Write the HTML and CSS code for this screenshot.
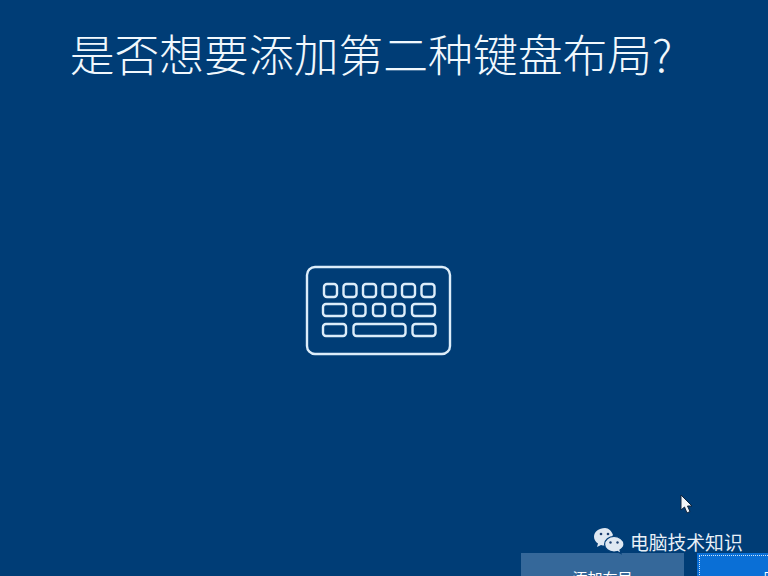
FILE: index.html
```html
<!DOCTYPE html>
<html lang="zh-CN">
<head>
<meta charset="UTF-8">
<meta name="viewport" content="width=device-width, initial-scale=1.0">
<title>是否想要添加第二种键盘布局?</title>
<link rel="stylesheet" href="styles.css">
</head>
<body>

<div id="oobe">
    <h1 class="title">是否想要添加第二种键盘布局?</h1>

    <div class="hero">
        <svg class="keyboard" width="150" height="94" viewBox="0 0 150 94" fill="none" stroke="#dcedfa" stroke-width="2.400">
            <rect x="3" y="3" width="143" height="87" rx="8"/>
            <rect x="20" y="20" width="13" height="13" rx="3"/>
            <rect x="39.500" y="20" width="13" height="13" rx="3"/>
            <rect x="59" y="20" width="13" height="13" rx="3"/>
            <rect x="78.500" y="20" width="13" height="13" rx="3"/>
            <rect x="98" y="20" width="13" height="13" rx="3"/>
            <rect x="117.500" y="20" width="13" height="13" rx="3"/>
            <rect x="19" y="40" width="23" height="12" rx="3"/>
            <rect x="49.500" y="40" width="12" height="12" rx="3"/>
            <rect x="69" y="40" width="12" height="12" rx="3"/>
            <rect x="88.500" y="40" width="12" height="12" rx="3"/>
            <rect x="108" y="40" width="23" height="12" rx="3"/>
            <rect x="19" y="60" width="23" height="12" rx="3"/>
            <rect x="49.500" y="60" width="52" height="12" rx="3"/>
            <rect x="108.500" y="60" width="23" height="12" rx="3"/>
        </svg>
    </div>

    <div class="actions">
        <button class="btn btn-secondary">添加布局</button>
        <button class="btn btn-primary">跳过</button>
    </div>
</div>

<!-- screen recording overlays -->
<svg class="cursor" width="14" height="20" viewBox="0 0 14 20">
    <path d="M1 1 L1 16 L4.500 13 L7 19 L10 17.500 L7.500 12 L12 12 Z" fill="#f2f5f8" stroke="#10243c" stroke-width="1"/>
</svg>

<div class="watermark">
    <svg class="wechat" width="32" height="28" viewBox="0 0 32 28">
        <path d="M12 1 C5.900 1 1 4.900 1 9.800 C1 12.600 2.600 15 5 16.600 L4 20 L8 18 C9.200 18.400 10.500 18.600 12 18.600 L20 8 C18.600 3.900 15.700 1 12 1 Z" fill="#dfe8f2"/>
        <path d="M21 9.500 C15.800 9.500 11.600 13 11.600 17.300 C11.600 21.600 15.800 25 21 25 C22.200 25 23.300 24.800 24.300 24.500 L28 26.500 L27 23 C29.500 21.500 31 19.500 31 17.300 C31 13 26.200 9.500 21 9.500 Z" fill="#dfe8f2" stroke="#003d76" stroke-width="1.200"/>
        <circle cx="8" cy="7" r="1.300" fill="#1d3f70"/>
        <circle cx="15" cy="7" r="1.300" fill="#1d3f70"/>
        <circle cx="17.500" cy="15.500" r="1.200" fill="#1d3f70"/>
        <circle cx="24.500" cy="15.500" r="1.200" fill="#1d3f70"/>
    </svg>
    <span class="watermark-text">电脑技术知识</span>
</div>

</body>
</html>
```

FILE: styles.css
```css
html, body {
    margin: 0;
    padding: 0;
    height: 100%;
}
body {
    position: relative;
    width: 768px;
    height: 576px;
    overflow: hidden;
    background-color: #003d76;
    color: #f1f8fd;
    font-family: "Noto Sans CJK SC", "Noto Sans", sans-serif;
}
#oobe {
    display: flex;
    flex-direction: column;
    height: 576px;
}
.title {
    margin: 0;
    padding-top: 21px;
    padding-right: 26px;
    height: 65px;
    line-height: 64px;
    font-size: 44.800px;
    font-weight: 300;
    text-align: center;
    white-space: nowrap;
}
.hero {
    display: flex;
    justify-content: center;
    padding-top: 179px;
    padding-right: 10px;
}
.keyboard {
    display: block;
}
.actions {
    display: flex;
    gap: 13px;
    margin-top: 195px;
    padding-left: 521px;
}
.btn {
    flex: none;
    height: 34px;
    border: none;
    color: #fff;
    font-family: inherit;
    font-size: 15px;
    padding: 14px 0 0;
    text-align: center;
}
.btn-secondary {
    width: 163px;
    background-color: #35689a;
}
.btn-primary {
    width: 163px;
    background-color: #0a6fd6;
    outline: 1px dotted #cfe4f7;
    outline-offset: -3px;
}
.cursor {
    position: absolute;
    left: 680px;
    top: 494px;
}
.watermark {
    position: absolute;
    left: 593px;
    top: 527px;
    display: flex;
    align-items: center;
    gap: 5px;
}
.wechat {
    display: block;
}
.watermark-text {
    font-size: 18.800px;
    color: #e9f0f7;
    white-space: nowrap;
}
```
